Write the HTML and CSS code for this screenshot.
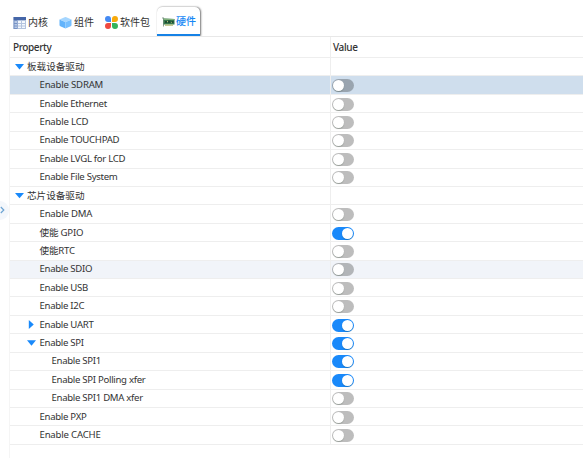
FILE: index.html
```html
<!DOCTYPE html>
<html lang="zh-CN">
<head>
<meta charset="utf-8">
<title>硬件</title>
<link rel="stylesheet" href="styles.css">
</head>
<body>
<nav class="tabs">
  <div class="tab kernel"><svg width="13" height="12" viewBox="0 0 13 12"><path fill="#b3c3de" d="M.5 0h12.500v12H.5z"/><path fill="#4566a8" d="M.5 0h12.500v3H.5z"/><path fill="#7792c4" d="M.5 3h4v9h-4z"/><path fill="#f4f8fd" d="M5 4h3v2H5zM9 4h3v2H9zM5 7h3v1.500H5zM9 7h3v1.500H9zM5 9.500h3V11H5zM9 9.500h3V11H9z"/><path fill="#b9cae5" d="M1.500 4h2.500v2H1.500zM1.500 7h2.500v1.500H1.500zM1.500 9.500h2.500V11H1.500z"/></svg><span>内核</span></div>
  <div class="tab component"><svg width="13" height="13" viewBox="0 0 13 13"><path fill="#62b3fb" d="M.5 3.500 6.500 6v6.500L1.300 10.200Q.5 9.800.5 9z"/><path fill="#76bfff" d="M12.500 3.500 6.500 6v6.500l5.200-2.300q.8-.4.8-1.200z"/><path fill="#a5d6ff" d="M.5 3.600 5.700 1.200q.8-.4 1.600 0l5.200 2.400-6 2.700z"/></svg><span>组件</span></div>
  <div class="tab package"><svg width="13" height="13" viewBox="0 0 13 13"><path fill="#458af3" d="M6 6H3.100A3 3 0 1 1 6 3.100z"/><path fill="#f8aa0b" d="M7 6V3.100A3 3 0 1 1 9.900 6z"/><path fill="#ef4940" d="M6 7v2.900A3 3 0 1 1 3.100 7z"/><path fill="#35b45d" d="M7 7h2.900A3 3 0 1 1 7 9.900z"/></svg><span>软件包</span></div>
  <div class="tab hardware active"><svg width="13" height="10" viewBox="0 0 13 10"><path fill="#8c9c91" d="M0 .5h2v9H1v-8H0z"/><path fill="#36784e" d="M1.500 1.500 12.500 2v5.500H1.500z"/><path fill="#82b07c" d="M1.500 1.500 12.500 2v1h-11z"/><path fill="#1d4b32" d="M3 4h2v2H3zM6 3.500h2.500V6H6zM9.500 4h2v2h-2z"/><path fill="#b3bb70" d="M3 7.500h8v1.300H3zM5 4h1v1H5zM9 5h.7v1H9z"/></svg><span>硬件</span></div>
</nav>
<main class="layout">
  <aside class="rail"><div class="handle"><svg width="5" height="8" viewBox="0 0 5 8"><path d="M.8 1 3.800 4 .8 7" fill="none" stroke="#6ba3d2" stroke-width="1.200"/></svg></div></aside>
  <section class="table">
    <div class="head"><div class="name">Property</div><div class="value">Value</div></div>
    <div class="row group"><div class="name"><i class="arrow down"></i><span>板载设备驱动</span></div><div class="value"></div></div>
    <div class="row selected caps"><div class="name"><span>Enable SDRAM</span></div><div class="value"><b class="switch"></b></div></div>
    <div class="row"><div class="name"><span>Enable Ethernet</span></div><div class="value"><b class="switch"></b></div></div>
    <div class="row caps"><div class="name"><span>Enable LCD</span></div><div class="value"><b class="switch"></b></div></div>
    <div class="row"><div class="name"><span>Enable TOUCHPAD</span></div><div class="value"><b class="switch"></b></div></div>
    <div class="row"><div class="name"><span>Enable LVGL for LCD</span></div><div class="value"><b class="switch"></b></div></div>
    <div class="row"><div class="name"><span>Enable File System</span></div><div class="value"><b class="switch"></b></div></div>
    <div class="row group"><div class="name"><i class="arrow down"></i><span>芯片设备驱动</span></div><div class="value"></div></div>
    <div class="row caps"><div class="name"><span>Enable DMA</span></div><div class="value"><b class="switch"></b></div></div>
    <div class="row caps"><div class="name"><span>使能 GPIO</span></div><div class="value"><b class="switch on"></b></div></div>
    <div class="row caps"><div class="name"><span>使能RTC</span></div><div class="value"><b class="switch"></b></div></div>
    <div class="row hover"><div class="name"><span>Enable SDIO</span></div><div class="value"><b class="switch"></b></div></div>
    <div class="row"><div class="name"><span>Enable USB</span></div><div class="value"><b class="switch"></b></div></div>
    <div class="row"><div class="name"><span>Enable I2C</span></div><div class="value"><b class="switch"></b></div></div>
    <div class="row branch"><div class="name"><i class="arrow right"></i><span>Enable UART</span></div><div class="value"><b class="switch on"></b></div></div>
    <div class="row branch"><div class="name"><i class="arrow down"></i><span>Enable SPI</span></div><div class="value"><b class="switch on"></b></div></div>
    <div class="row leaf"><div class="name"><span>Enable SPI1</span></div><div class="value"><b class="switch on"></b></div></div>
    <div class="row leaf"><div class="name"><span>Enable SPI Polling xfer</span></div><div class="value"><b class="switch on"></b></div></div>
    <div class="row leaf"><div class="name"><span>Enable SPI1 DMA xfer</span></div><div class="value"><b class="switch"></b></div></div>
    <div class="row"><div class="name"><span>Enable PXP</span></div><div class="value"><b class="switch"></b></div></div>
    <div class="row caps"><div class="name"><span>Enable CACHE</span></div><div class="value"><b class="switch"></b></div></div>
  </section>
</main>
</body>
</html>
```
FILE: styles.css
```css
* { box-sizing: border-box; }
body {
  margin: 0;
  height: 458px;
  overflow: hidden;
  background: #fff;
  color: #333;
  font: 9.6px/14px "Noto Sans", "Noto Sans CJK SC", sans-serif;
}
.tabs {
  height: 36px;
  padding: 7px 0 0 13px;
  display: flex;
}
.tab {
  height: 29px;
  display: flex;
  align-items: center;
  gap: 2px;
  font-size: 10px;
  white-space: nowrap;
}
.tab svg { flex: none; margin-top: 2px; }
.kernel { width: 46px; }
.component { width: 46px; }
.package { width: 52px; }
.active {
  width: 43px;
  padding-left: 5px;
  gap: 1px;
  color: #1687f5;
  font-weight: 500;
  border-radius: 5px 5px 0 0;
  border-bottom: 2px solid #1682e6;
  box-shadow: 1px 0 2px #777, 0 0 1px #ccc;
}
.active svg { margin-top: 3px; }
.layout { display: flex; height: 422px; position: relative; background: #fff; }
.rail { width: 10px; border-right: 1px solid #f5f5f5; }
.handle {
  width: 9px;
  height: 19px;
  margin-top: 165px;
  padding-top: 3px;
  border-radius: 0 9px 9px 0;
  background: #f4f7fb;
}
.table { flex: 1; border-top: 1px solid #e8e8e8; }
.head, .row {
  display: grid;
  grid-template-columns: 320px 1fr;
  border-bottom: 1px solid #eee;
}
.head { height: 21px; line-height: 20px; font-weight: 500; font-size: 10px; letter-spacing: -.35px; }
.head .name { padding-left: 3px; letter-spacing: -.45px; }
.head .value { padding-left: 2px; }
.head .name { letter-spacing: -.4px; }
.row { height: 18.43px; letter-spacing: -.3px; }
.caps { letter-spacing: -.2px; }
.name, .value { display: flex; align-items: center; }
.name { padding-left: 29.5px; white-space: nowrap; }
.value { border-left: 1px solid #eee; padding-left: .5px; }
.group .name { padding-left: 5px; gap: 3px; letter-spacing: 0; }
.branch .name { padding-left: 17px; gap: 3.5px; }
.leaf .name { padding-left: 41.5px; }
.selected { background: #cfdeed; }
.hover { background: #f1f4f9; }
.arrow { width: 9px; height: 9px; background: #1989fa; }
.down { clip-path: polygon(0 20%, 100% 20%, 50% 80%); }
.right { clip-path: polygon(20% 0, 75% 50%, 20% 100%); }
.switch {
  width: 22.5px;
  height: 13px;
  margin-top: 1px;
  padding: 1px;
  display: flex;
  border-radius: 7px;
  background: rgba(0, 0, 0, .26);
}
.switch::before {
  content: "";
  width: 11px;
  height: 11px;
  border-radius: 50%;
  background: #fff;
  box-shadow: 0 1px 1px rgba(0, 35, 11, .2);
}
.on { justify-content: flex-end; background: #1989fa; }
```
